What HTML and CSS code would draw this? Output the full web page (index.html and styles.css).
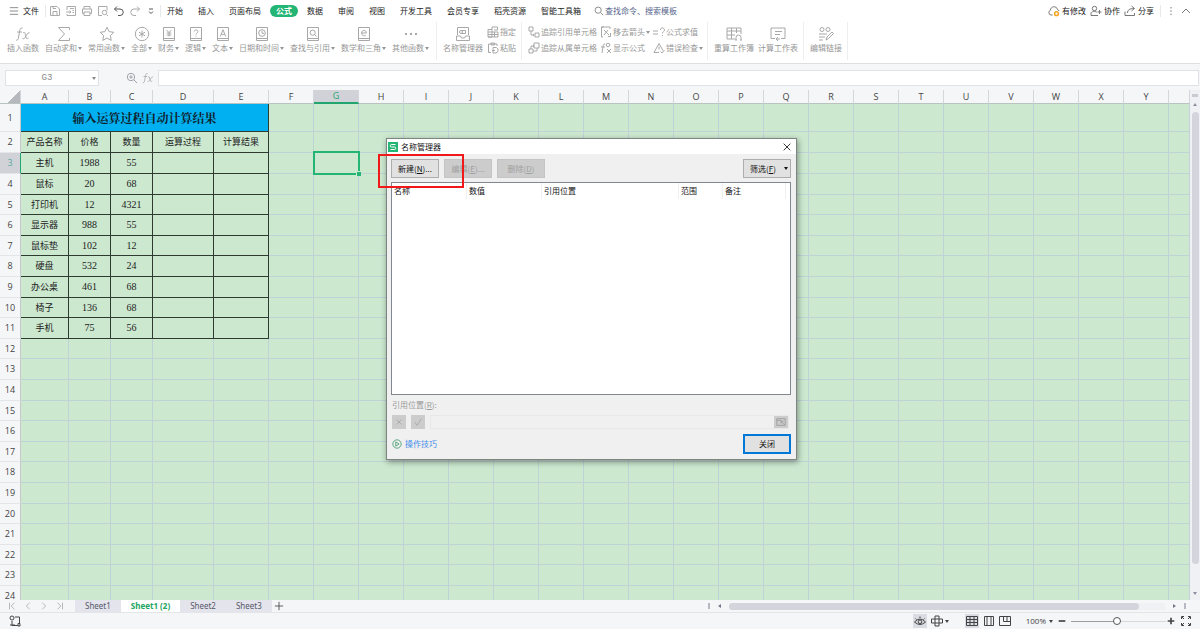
FILE: index.html
```html
<!DOCTYPE html>
<html lang="zh-CN">
<head>
<meta charset="utf-8">
<title>名称管理器</title>
<link rel="stylesheet" href="styles.css">
</head>
<body>
<svg class="defs" aria-hidden="true">
  <symbol id="save" viewBox="0 0 12 12"><path d="M1.5 1.5h6.5l2.5 2.5v6.500h-9zM4 10.500v-4h4v4M4 1.500v2h3"/></symbol>
  <symbol id="export" viewBox="0 0 12 12"><path d="M2 5V1.500h8.500v9h-8.500V9M1 7h5M4.500 5.500l1.500 1.500-1.500 1.500M5 3.500h4M7.500 5.500h1.500M7.500 7.500h1.500"/></symbol>
  <symbol id="print" viewBox="0 0 12 12"><path d="M3 4V1.500h6V4M3 8.500h-1.500V4h9v4.500h-1.500M3 7h6v3.500h-6z"/></symbol>
  <symbol id="preview" viewBox="0 0 12 12"><path d="M5 10.500h-3.500v-9h8.500v4M9.500 9.500l1.500 1.500"/><circle cx="7.500" cy="7.500" r="2.200"/></symbol>
  <symbol id="undo" viewBox="0 0 12 12"><path d="M4 1.500l-2.500 2.500 2.500 2.500M1.500 4h5.500a3 3 0 0 1 0 6.500h-2"/></symbol>
  <symbol id="redo" viewBox="0 0 12 12"><path d="M8 1.500l2.500 2.500-2.500 2.500M10.500 4h-5.500a3 3 0 0 0 0 6.500h2"/></symbol>
  <symbol id="more" viewBox="0 0 12 12"><path d="M4 4h4M4 6.500l2 2 2-2"/></symbol>
  <symbol id="search" viewBox="0 0 12 12"><circle cx="5" cy="5" r="3.700"/><path d="M8 8l3 3"/></symbol>
  <symbol id="zoomin" viewBox="0 0 12 12"><circle cx="5" cy="5" r="3.700"/><path d="M8 8l3 3M3.200 5h3.600M5 3.200v3.600"/></symbol>
  <symbol id="fx" viewBox="0 0 16 16"><path d="M7.500 2C5 1.500 4.800 4 4.500 6L3.300 12.500C3 14 2 14.500 1 14M2 6h5M8 7c2-1.500 2 0 2.500 2.500s1 4 3 2.500M14.500 6.500c-2 0-3 3-4 4.500s-1.500 2-3 1.500"/></symbol>
  <symbol id="sum" viewBox="0 0 16 16"><path d="M13.500 4V1.500H2.500L8.500 8l-6 6.500h11V12"/></symbol>
  <symbol id="star" viewBox="0 0 16 16"><path d="M8 1.200l2.100 4.400 4.700.7-3.400 3.300.8 4.800L8 12.100l-4.200 2.300.8-4.800L1.200 6.300l4.700-.7z"/></symbol>
  <symbol id="all" viewBox="0 0 16 16"><circle cx="8" cy="8" r="6.700"/><path d="M8 4.500v7M5 6.200l6 3.600M11 6.200l-6 3.600"/></symbol>
  <symbol id="money" viewBox="0 0 16 16"><path d="M2.500 1.500h11v13h-11zM2.500 12.500h11M5.500 4L8 6.500 10.500 4M8 6.500v4M5.700 7h4.600M5.700 9h4.600"/></symbol>
  <symbol id="logic" viewBox="0 0 16 16"><path d="M2.500 1.500h11v13h-11zM2.500 12.500h11M6.200 5.500c0-2 3.800-2 3.800 0C10 7 8 6.800 8 8.500M8 9.700v1"/></symbol>
  <symbol id="text" viewBox="0 0 16 16"><path d="M2.500 1.500h11v13h-11zM2.500 12.500h11M5.300 10.500L8 3.700l2.700 6.800M6.300 8.300h3.400"/></symbol>
  <symbol id="date" viewBox="0 0 16 16"><path d="M2.500 1.500h11v13h-11zM2.500 12.500h11M8 5v2.300h2"/><circle cx="8" cy="7" r="3.300"/></symbol>
  <symbol id="lookup" viewBox="0 0 16 16"><path d="M2.500 1.500h11v13h-11zM2.500 12.500h11M9.500 8.500l2 2"/><circle cx="7.700" cy="6.700" r="2.600"/></symbol>
  <symbol id="math" viewBox="0 0 16 16"><path d="M2.500 1.500h11v13h-11zM2.500 12.500h11M5.700 7h4.600c0-3.500-4.600-3.500-4.600 0 0 3.200 3.200 3.200 4.300 2.200"/></symbol>
  <symbol id="dots" viewBox="0 0 16 16"><path d="M2 8h2M7 8h2M12 8h2"/></symbol>
  <symbol id="names" viewBox="0 0 16 16"><path d="M2.500 9V1.500h11V9M1.500 14.500V10h4l1 2h3l1-2h4v4.500zM6.500 4.500h4v3h-4"/><circle cx="6" cy="6" r="1.500"/></symbol>
  <symbol id="assign" viewBox="0 0 12 12"><path d="M1 3.500h4v7.500H1zM1 6h10v5H1M1 8.500h10M7.500 6v5M5 3.500V1h5.500v3H7"/></symbol>
  <symbol id="paste" viewBox="0 0 12 12"><path d="M4 10.500H1.500V2H10v2M4 1h3.500v2H4zM6 5.500h3.500L11 7v2.500L9 11H6zM5 8.500h3"/></symbol>
  <symbol id="trace1" viewBox="0 0 12 12"><path d="M1 1h4v4H1zM7 7h4v4H7zM3 5v4h3M5 8l1.200 1L5 10"/></symbol>
  <symbol id="trace2" viewBox="0 0 12 12"><path d="M1 7h4v4H1zM6 1h5v5H6zM3 7V4h3M5 3l1.200 1L5 5M5 9h4V6"/></symbol>
  <symbol id="remove" viewBox="0 0 12 12"><path d="M4 1H1.500v10H3M1.500 1H10v2M4 4l5 5M8 4L4 9M10.500 7v3.500H8"/></symbol>
  <symbol id="showfx" viewBox="0 0 12 12"><path d="M5 2C3.500 1.500 3.300 3 3 5l-1 6M1 5h4M7 7l4 4M11 7l-4 4"/><circle cx="8" cy="3" r="1.800"/></symbol>
  <symbol id="eval" viewBox="0 0 12 12"><path d="M0 5h5M0 8h5M7.500 4c0-3 4-2.500 4 0 0 1.500-2 1.500-2 3.500M9.500 9v1"/></symbol>
  <symbol id="check" viewBox="0 0 12 12"><path d="M6 1.500L1 10.500h5M6 1.500l4 7M6 4.500v3M7.500 9.500L9 11l2.500-3"/></symbol>
  <symbol id="book" viewBox="0 0 16 16"><path d="M9 13H1V2h14v6M1 5h14M5.500 2v11M10.500 2v5M1 9h8M10 14v-2.500a2.500 2.500 0 0 1 5 0V14M9 14h2M14 14h2"/></symbol>
  <symbol id="calc" viewBox="0 0 16 16"><path d="M5 12.500H1V2h14v10.500h-4M5 5.500h7M5 8.500h5M8 11l-2 2 2 2M6 13h4"/></symbol>
  <symbol id="link" viewBox="0 0 16 16"><circle cx="4" cy="3.500" r="2"/><circle cx="10" cy="3.500" r="2"/><path d="M1 8h8M1 11h6M1 14h4M8 14l1-3 5-5 1.500 1.500-5 5z"/></symbol>
  <symbol id="cloud" viewBox="0 0 12 12"><path d="M4.500 10H3a2.500 2.500 0 0 1-.5-4.800C2.500 1 8.500.5 9.500 4.500a2.500 2.500 0 0 1 1.500 1.500"/><circle class="orange" cx="8.500" cy="8.700" r="1.900"/></symbol>
  <symbol id="people" viewBox="0 0 12 12"><circle cx="4.500" cy="3.500" r="2.200"/><path d="M1 10.500V8.500c0-2.500 5-2.500 6-1M1 10.500h7M9.500 5v4M7.500 7h4"/></symbol>
  <symbol id="share" viewBox="0 0 12 12"><path d="M1 6.500v4h9.500V8M3.500 8c0-3 2-4.500 6.500-4.500M7.500 1l3 2.500-3 2.500"/></symbol>
  <symbol id="macro" viewBox="0 0 12 12"><circle cx="3" cy="3" r="2"/><path d="M6 2h4.500v7M3 6v4.500h6M1 10h5M9 8.500v2.500h2V8.500z"/></symbol>
  <symbol id="eye" viewBox="0 0 12 12"><path d="M.5 7Q6 1 11.500 7 6 12 .5 7zM1.500 3.500l1 1M6 1.500V3M10.500 3.500l-1 1"/><circle cx="6" cy="6.800" r="1.800"/></symbol>
  <symbol id="focus" viewBox="0 0 12 12"><path d="M.5 4h11v4H.500zM4 1h4v10H4z"/></symbol>
  <symbol id="gridview" viewBox="0 0 12 12"><path d="M.5 1.500h11v9H.500zM.5 4.500h11M.5 7.500h11M4 1.500v9M8 1.500v9"/></symbol>
  <symbol id="pageview" viewBox="0 0 12 12"><path d="M1.500 1.500h9v9h-9zM4 1.500v9M8 1.500v9"/></symbol>
  <symbol id="breakview" viewBox="0 0 12 12"><path d="M.5 1.500h11v9H.500zM4.500 1.500v5h7M8 1.500v5"/></symbol>
  <symbol id="full" viewBox="0 0 12 12"><path d="M1.500 4V1.500H4M8 1.500h2.500V4M10.500 8v2.500H8M4 10.500H1.500V8M2 2l2 2M10 2L8 4M10 10L8 8M2 10l2-2"/></symbol>
</svg>

<nav class="menubar">
  <button class="file"><svg class="i10" viewBox="0 0 12 12"><path d="M1 2h10M1 6h10M1 10h10"/></svg>文件</button>
  <div class="quick">
    <button aria-label="保存"><svg class="i12"><use href="#save"/></svg></button>
    <button aria-label="输出"><svg class="i12"><use href="#export"/></svg></button>
    <button aria-label="打印"><svg class="i12"><use href="#print"/></svg></button>
    <button aria-label="预览"><svg class="i12"><use href="#preview"/></svg></button>
    <button aria-label="撤销" class="dark"><svg class="i12"><use href="#undo"/></svg></button>
    <button aria-label="恢复"><svg class="i12"><use href="#redo"/></svg></button>
    <button aria-label="更多" class="dark"><svg class="i12"><use href="#more"/></svg></button>
  </div>
  <div class="tabs">
    <button>开始</button><button>插入</button><button>页面布局</button><button class="active">公式</button><button>数据</button><button>审阅</button><button>视图</button><button>开发工具</button><button>会员专享</button><button>稻壳资源</button><button>智能工具箱</button>
    <button class="find"><svg class="i10"><use href="#search"/></svg>查找命令、搜索模板</button>
  </div>
  <div class="account">
    <button><svg class="i12"><use href="#cloud"/></svg>有修改</button>
    <button><svg class="i12"><use href="#people"/></svg>协作</button>
    <button><svg class="i12"><use href="#share"/></svg>分享</button>
    <button class="kebab" aria-label="更多选项"><svg class="i10" viewBox="0 0 10 10"><path d="M5 1v1.500M5 4.300v1.500M5 7.600v1.500"/></svg></button>
    <button aria-label="收起功能区"><svg class="i12" viewBox="0 0 12 12"><path d="M2 8l4-4 4 4"/></svg></button>
  </div>
</nav>

<section class="ribbon">
  <div class="group first">
    <button class="tool"><svg><use href="#fx"/></svg><span>插入函数</span></button>
    <button class="tool"><svg><use href="#sum"/></svg><span class="drop">自动求和</span></button>
    <button class="tool"><svg><use href="#star"/></svg><span class="drop">常用函数</span></button>
    <button class="tool"><svg><use href="#all"/></svg><span class="drop">全部</span></button>
    <button class="tool"><svg><use href="#money"/></svg><span class="drop">财务</span></button>
    <button class="tool"><svg><use href="#logic"/></svg><span class="drop">逻辑</span></button>
    <button class="tool"><svg><use href="#text"/></svg><span class="drop">文本</span></button>
    <button class="tool"><svg><use href="#date"/></svg><span class="drop">日期和时间</span></button>
    <button class="tool"><svg><use href="#lookup"/></svg><span class="drop">查找与引用</span></button>
    <button class="tool"><svg><use href="#math"/></svg><span class="drop">数学和三角</span></button>
    <button class="tool"><svg class="bold"><use href="#dots"/></svg><span class="drop">其他函数</span></button>
  </div>
  <div class="group">
    <button class="tool"><svg><use href="#names"/></svg><span>名称管理器</span></button>
    <div class="stack">
      <button><svg class="i12"><use href="#assign"/></svg>指定</button>
      <button><svg class="i12"><use href="#paste"/></svg>粘贴</button>
    </div>
  </div>
  <div class="group tight">
    <div class="stack">
      <button><svg class="i12"><use href="#trace1"/></svg>追踪引用单元格</button>
      <button><svg class="i12"><use href="#trace2"/></svg>追踪从属单元格</button>
    </div>
    <div class="stack">
      <button><svg class="i12"><use href="#remove"/></svg><span class="drop">移去箭头</span></button>
      <button><svg class="i12"><use href="#showfx"/></svg>显示公式</button>
    </div>
    <div class="stack">
      <button><svg class="i12"><use href="#eval"/></svg>公式求值</button>
      <button><svg class="i12"><use href="#check"/></svg><span class="drop">错误检查</span></button>
    </div>
  </div>
  <div class="group">
    <button class="tool"><svg><use href="#book"/></svg><span>重算工作簿</span></button>
    <button class="tool"><svg><use href="#calc"/></svg><span>计算工作表</span></button>
  </div>
  <div class="group">
    <button class="tool"><svg><use href="#link"/></svg><span>编辑链接</span></button>
  </div>
</section>

<section class="formula">
  <div class="namebox"><input aria-label="名称框" value="G3"><i class="caret"></i></div>
  <div class="fbuttons">
    <svg class="i12"><use href="#zoomin"/></svg>
    <svg class="i12"><use href="#fx"/></svg>
  </div>
  <input class="finput" aria-label="编辑栏">
</section>

<main class="work">
  <div class="sheet">
    <table class="cells" id="cells">
      <colgroup><col class="c-head"><col class="c-a"><col class="c-b"><col class="c-b"><col class="c-d"><col class="c-e"></colgroup>
      <thead><tr><th class="corner"></th></tr></thead>
      <tbody></tbody>
    </table>
  </div>
  <div class="vscroll"><span class="split"></span><i class="up"></i><span class="vthumb"></span><i class="down"></i></div>
</main>

<footer class="sheetbar">
  <div class="nav">
    <button aria-label="第一张"><svg class="i10" viewBox="0 0 12 12"><path d="M3 2v8M9 2L5 6l4 4"/></svg></button>
    <button aria-label="上一张"><svg class="i10" viewBox="0 0 12 12"><path d="M8 2L4 6l4 4"/></svg></button>
    <button aria-label="下一张"><svg class="i10" viewBox="0 0 12 12"><path d="M4 2l4 4-4 4"/></svg></button>
    <button aria-label="最后一张"><svg class="i10" viewBox="0 0 12 12"><path d="M3 2l4 4-4 4M9 2v8"/></svg></button>
  </div>
  <button class="stab">Sheet1</button><button class="stab on">Sheet1 (2)</button><button class="stab">Sheet2</button><button class="stab">Sheet3</button>
  <button class="add" aria-label="新建工作表"><svg class="i10" viewBox="0 0 12 12"><path d="M6 1v10M1 6h10"/></svg></button>
  <div class="hscroll"><b></b><i class="left"></i><span class="track"><span class="hthumb"></span></span><i class="right"></i><b></b></div>
</footer>

<footer class="status">
  <svg class="i12"><use href="#macro"/></svg>
  <div class="views">
    <button class="lit" aria-label="护眼模式"><svg class="i12"><use href="#eye"/></svg></button>
    <button aria-label="阅读模式"><svg class="i12"><use href="#focus"/></svg><i class="caret"></i></button>
    <button class="lit gap" aria-label="普通视图"><svg class="i12"><use href="#gridview"/></svg></button>
    <button aria-label="页面布局"><svg class="i12"><use href="#pageview"/></svg></button>
    <button aria-label="分页预览"><svg class="i12"><use href="#breakview"/></svg></button>
    <button class="pct">100%<i class="caret"></i></button>
    <button aria-label="缩小"><svg class="i10 bold" viewBox="0 0 12 12"><path d="M2 6h8"/></svg></button>
    <input type="range" min="0" max="100" value="48" aria-label="缩放">
    <button class="plus" aria-label="放大"><svg class="i10 bold" viewBox="0 0 12 12"><path d="M6 2v8M2 6h8"/></svg></button>
    <button aria-label="全屏"><svg class="i12"><use href="#full"/></svg></button>
  </div>
</footer>

<div class="dialog" role="dialog" aria-labelledby="dlg-title">
  <header>
    <span class="logo"><svg viewBox="0 0 10 10"><path d="M7.500 2.500h-4a1.200 1.200 0 0 0 0 2.500h3a1.200 1.200 0 0 1 0 2.500h-4"/></svg></span>
    <h1 id="dlg-title">名称管理器</h1>
    <button class="x" aria-label="关闭窗口"><svg class="i10" viewBox="0 0 12 12"><path d="M2 2l8 8M10 2l-8 8"/></svg></button>
  </header>
  <div class="body">
    <div class="actions">
      <button class="btn"><span>新建(<u>N</u>)...</span></button>
      <button class="btn" disabled><span>编辑(<u>E</u>)...</span></button>
      <button class="btn" disabled><span>删除(<u>D</u>)</span></button>
      <button class="btn filter"><span>筛选(<u>F</u>)</span><i class="caret"></i></button>
    </div>
    <div class="list">
      <table>
        <thead><tr><th class="n1">名称</th><th class="n1">数值</th><th class="n3">引用位置</th><th class="n4">范围</th><th class="n5">备注</th></tr></thead>
      </table>
    </div>
    <label for="ref">引用位置(<u>R</u>):</label>
    <div class="refrow">
      <button disabled aria-label="取消"><svg class="i10" viewBox="0 0 12 12"><path d="M3 3l6 6M9 3l-6 6"/></svg></button>
      <button disabled aria-label="确定"><svg class="i10" viewBox="0 0 12 12"><path d="M2 6l3 4 5-8"/></svg></button>
      <div class="refbox"><input id="ref" disabled><button disabled aria-label="选择区域"><svg class="i10" viewBox="0 0 12 12"><path d="M1 2h10v8H1zM1 4h5M6 5l4 4M6 8V5h3"/></svg></button></div>
    </div>
    <div class="bottom">
      <a href="#"><svg class="i10" viewBox="0 0 12 12"><circle cx="6" cy="6" r="5"/><path d="M4.500 3.500v5l4-2.500z"/></svg>操作技巧</a>
      <button class="btn close">关闭</button>
    </div>
  </div>
  <span class="marker"></span>
</div>
<script src="sheet.js"></script>
</body>
</html>
```
FILE: styles.css
```css
* { box-sizing: border-box; }
body {
  margin: 0;
  height: 100vh;
  display: flex;
  flex-direction: column;
  position: relative;
  overflow: hidden;
  background: #fff;
  color: #333;
  font: 8px/12px "Noto Sans CJK SC", sans-serif;
}
button, input {
  font: inherit;
  color: inherit;
  background: none;
  border: 0;
  padding: 0;
  margin: 0;
}
button { display: flex; align-items: center; white-space: nowrap; }
svg { fill: none; stroke: currentColor; stroke-width: 1; flex: none; display: block; }
.defs { position: absolute; width: 0; height: 0; }
.i10 { width: 10px; height: 10px; }
.i12 { width: 12px; height: 12px; }
.bold { stroke-width: 2; }
.orange { stroke: #f5a623; stroke-width: 1.5; }
.caret {
  border: 2px solid transparent;
  border-top: 3px solid currentColor;
  border-bottom: 0;
  flex: none;
}

.menubar { display: flex; align-items: center; height: 22px; flex: none; color: #222; }
.menubar svg { color: #777; }
.file { padding: 0 6px 0 9px; gap: 4px; border-right: 1px solid #e8e8e8; }
.quick { display: flex; gap: 4px; padding: 0 3px; border-right: 1px solid #e8e8e8; }
.quick svg { color: #aaa; }
.quick .dark svg { color: #555; }
.tabs { display: flex; align-items: center; gap: 15px; padding-left: 6px; }
.tabs .active {
  background: #22b573;
  color: #fff;
  font-weight: bold;
  border-radius: 6px;
  padding: 0 6px;
  margin: 0 -6px;
}
.tabs .find { color: #56648a; gap: 1px; margin-left: -2px; }
.account { display: flex; align-items: center; gap: 4px; margin-left: auto; padding-right: 8px; }
.account button { gap: 2px; }
.account .kebab { width: 20px; height: 12px; justify-content: center; border-left: 1px solid #e8e8e8; margin-left: 2px; margin-right: -4px; }

.ribbon {
  display: flex;
  height: 42px;
  flex: none;
  color: #979797;
  border-bottom: 1px solid #dcdfe2;
}
.ribbon svg { color: #a8a8a8; }
.group { display: flex; align-items: flex-start; gap: 4px; height: 38px; padding: 4px 5px 0 6px; border-right: 1px solid #eeeeee; }
.group.first { gap: 6px; padding-right: 7px; padding-left: 7px; }
.group.tight { gap: 3px; padding-right: 4px; }
.tool { flex-direction: column; min-width: 21px; }
.tool svg { width: 16px; height: 16px; }
.drop { display: flex; align-items: center; gap: 1px; }
.drop::after { content: ""; border: 2px solid transparent; border-top: 3px solid currentColor; border-bottom: 0; }
.stack { display: flex; flex-direction: column; gap: 4px; }
.stack button { gap: 1px; }

.formula { display: flex; align-items: center; height: 26px; flex: none; background: #f5f6f8; padding: 2px 1px 0 5px; }
.namebox { display: flex; align-items: center; width: 94px; height: 16px; background: #fff; border: 1px solid #e0e2e6; padding-right: 2px; color: #888; }
.namebox input { flex: 1; min-width: 0; padding-right: 4px; text-align: center; font-family: "Liberation Mono", monospace; font-size: 9px; }
.fbuttons { display: flex; gap: 4px; padding: 0 4px 0 27px; color: #a0a4aa; }
.finput { flex: 1; height: 16px; background: #fff; border: 1px solid #e0e2e6; }

.work { flex: 1; min-height: 0; display: flex; }
.sheet { flex: 1; min-width: 0; overflow: hidden; background: #cce8cf; }
.cells { table-layout: fixed; width: 100%; border-collapse: separate; border-spacing: 0; }
.cells th, .cells td { padding: 0; text-align: center; white-space: nowrap; font-weight: normal; }
.c-head { width: 21px; }
.c-a { width: 48px; }
.c-b { width: 42px; }
.c-d { width: 61px; }
.c-e { width: 55px; }
.c-x { width: 45px; }
.cells th { background: #f5f6f8; color: #444; font: 9px/10px "Open Sans", sans-serif; }
.cells thead th { height: 14px; border-right: 1px solid #d3d6da; border-bottom: 1px solid #b9c4bf; }
.cells thead th.corner { background: linear-gradient(135deg, #f5f6f8 62%, #b5b8bd 62%); }
.cells tbody tr { height: 21px; }
.cells tbody tr:nth-child(5n), .cells tbody tr:nth-child(5n + 7) { height: 20px; }
.cells tbody tr:first-child { height: 28px; }
.cells tbody th { border-right: 1px solid #c5c9cc; border-bottom: 1px solid #e3e5e8; }
.cells td { border-right: 1px solid #bfd2d6; border-bottom: 1px solid #bfd2d6; }
.cells thead th.hot { background: #d0d2d8; color: #22a56e; border-bottom: 2px solid #22a56e; }
.cells tbody th.hot { background: #d0d2d8; color: #5fa8a0; border-right-color: #22a56e; }
.cells td.data { border-color: #2f3a31; color: #222; font: 9px/12px "Noto Sans CJK SC", sans-serif; }
.cells td.num { font: 10px/12px "Liberation Serif", serif; }
.cells td.title { background: #00b0f0; border-color: #2f3a31; color: #10202c; font: bold 12px/18px "Noto Serif CJK SC", "Noto Sans CJK SC", serif; }
.cells td.sel { position: relative; }
.cells td.sel::before { content: ""; position: absolute; inset: -2px -2px -2px -1px; border: 2px solid #22b573; }
.cells td.sel::after { content: ""; position: absolute; right: -3px; bottom: -3px; width: 4px; height: 4px; background: #22b573; border: solid #cce8cf; border-width: 1px 0 0 1px; }
.vscroll { width: 10px; display: flex; flex-direction: column; align-items: center; background: #f0f1f5; }
.split { width: 6px; height: 3px; margin: 4px 0 6px; background: #c9cbd2; }
.up, .down { border: 2px solid transparent; }
.up { border-bottom: 3px solid #8a8fa0; border-top: 0; margin-bottom: 6px; }
.down { border-top: 3px solid #8a8fa0; border-bottom: 0; margin: 28px 0 5px; }
.vthumb { flex: 1; width: 7px; border-radius: 4px; background: #d3d4dc; }

.sheetbar { display: flex; align-items: stretch; height: 13px; flex: none; background: #f5f6f8; border-bottom: 1px solid #e3e5e9; }
.nav { display: flex; align-items: center; gap: 6px; width: 75px; padding-left: 7px; color: #aaa; }
.stab { padding: 0 10px; background: #e4e4ec; color: #56586a; font-family: "Noto Sans", sans-serif; }
.stab.on { background: #fff; color: #22a561; font-weight: bold; }
.add { padding-left: 2px; color: #444; }
.hscroll { display: flex; align-items: center; gap: 8px; margin-left: auto; width: 41%; padding-right: 14px; }
.hscroll b { width: 2px; height: 6px; background: #b7b9c2; }
.left, .right { border: 2px solid transparent; }
.left { border-right: 3px solid #74788a; border-left: 0; }
.right { border-left: 3px solid #74788a; border-right: 0; }
.track { flex: 1; display: flex; background: #f0f1f5; }
.hthumb { width: 94%; height: 7px; border-radius: 4px; background: #d3d4dc; }

.status { display: flex; align-items: center; justify-content: space-between; height: 16px; flex: none; background: #f5f6f8; color: #444; padding: 0 8px 0 9px; }
.views { display: flex; align-items: center; gap: 4px; }
.views button { height: 14px; gap: 2px; }
.views .lit { background: #dadce4; padding: 0 1px; }
.views .gap { margin-left: 12px; }
.views .pct { margin-left: 11px; gap: 3px; font-family: "Open Sans", sans-serif; }
.views .plus { margin-left: -4px; }
.views input { appearance: none; width: 95px; height: 10px; background: linear-gradient(#9a9ca4, #9a9ca4) 0 50% / 48% 1px no-repeat, linear-gradient(#d6d8dd, #d6d8dd) 0 50% / 100% 1px no-repeat; }
.views input::-webkit-slider-thumb { appearance: none; width: 8px; height: 8px; border: 1px solid #555; border-radius: 50%; background: #fff; }

.dialog {
  position: absolute;
  left: 386px;
  top: 138px;
  width: 411px;
  background: #f0f0f0;
  border: 1px solid #7d8580;
  box-shadow: 1px 2px 6px rgba(0, 0, 0, .4);
  color: #111;
}
.dialog header { display: flex; align-items: center; gap: 3px; height: 15px; padding: 0 4px 0 1px; background: #fff; }
.logo { width: 10px; height: 10px; background: #22b573; color: #fff; }
.dialog h1 { margin: 0; font-size: 8px; font-weight: normal; }
.x { margin-left: auto; }
.body { padding: 5px 5px 5px 4px; display: flex; flex-direction: column; }
.actions { display: flex; gap: 5px; }
.btn { width: 48px; height: 19px; justify-content: center; background: #e1e1e1; border: 1px solid #adadad; }
.btn:disabled { background: #cccccc; border-color: #c4c4c4; color: #a0a0a0; }
.filter { margin-left: auto; gap: 8px; padding-left: 4px; }
.list { height: 213px; margin-top: 4px; background: #fff; border: 1px solid #828790; }
.list table { table-layout: fixed; width: 394px; border-spacing: 0; }
.list th { height: 16px; padding: 0 2px; text-align: left; font-weight: normal; line-height: 12px; border-right: 1px solid #f0f0f0; }
.n1 { width: 75px; }
.n3 { width: 137px; }
.n4 { width: 44px; }
.n5 { width: 63px; }
.dialog label { margin: 4px 0 4px 1px; color: #999; }
.refrow { display: flex; align-items: center; gap: 5px; padding: 0 2px 0 1px; }
.refrow button { width: 14px; height: 14px; justify-content: center; background: #cccccc; color: #a6a6a6; }
.refbox { flex: 1; display: flex; height: 14px; border: 1px solid #e8e8e8; }
.refbox input { flex: 1; min-width: 0; }
.refbox button { height: 12px; color: #999; }
.bottom { display: flex; align-items: center; justify-content: space-between; margin-top: 5px; }
.bottom a { display: flex; align-items: center; gap: 3px; padding-left: 1px; color: #3d8be8; text-decoration: none; }
.bottom a svg { color: #3f9a6a; }
.close { height: 20px; border: 2px solid #0078d7; }
.marker { position: absolute; left: -9px; top: 15px; width: 86px; height: 34px; border: 2px solid #f01818; pointer-events: none; }
```
FILE: sheet.js
```js
const letters = 'ABCDEFGHIJKLMNOPQRSTUVWXY'.split('');
const rows = [
  ['产品名称', '价格', '数量', '运算过程', '计算结果'],
  ['主机', 1988, 55], ['鼠标', 20, 68], ['打印机', 12, 4321],
  ['显示器', 988, 55], ['鼠标垫', 102, 12], ['硬盘', 532, 24],
  ['办公桌', 461, 68], ['椅子', 136, 68], ['手机', 75, 56]
];
const table = document.getElementById('cells');
const add = (parent, tag, cls, text) => {
  const el = document.createElement(tag);
  if (cls) el.className = cls;
  if (text !== undefined) el.textContent = text;
  parent.appendChild(el);
  return el;
};
for (let i = 5; i < 25; i++) add(table.querySelector('colgroup'), 'col', 'c-x');
add(table.querySelector('colgroup'), 'col');
letters.forEach(l => add(table.tHead.rows[0], 'th', l === 'G' ? 'hot' : '', l));
add(table.tHead.rows[0], 'th');
for (let r = 1; r <= 24; r++) {
  const tr = add(table.tBodies[0], 'tr');
  add(tr, 'th', r === 3 ? 'hot' : '', r);
  if (r === 1) add(tr, 'td', 'title', '输入运算过程自动计算结果').colSpan = 5;
  for (let c = r === 1 ? 5 : 0; c < 26; c++) {
    const inTable = r >= 2 && r <= 11 && c < 5;
    const value = inTable ? rows[r - 2][c] : undefined;
    let cls = inTable ? 'data' : '';
    if (typeof value === 'number') cls += ' num';
    if (r === 3 && c === 6) cls = 'sel';
    add(tr, 'td', cls, value);
  }
}
```
